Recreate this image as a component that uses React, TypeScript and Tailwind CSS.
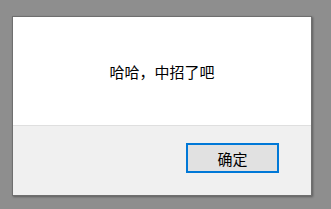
export default function App() {
  return (
    <div className="w-[331px] h-[209px] bg-[#8e8e8e] pl-[12px] pt-[16px]" style={{ fontFamily: '"Noto Sans CJK SC", "Noto Sans", sans-serif' }}>
      <div className="w-[300px] h-[180px] border border-[#6f6f6f] bg-white flex flex-col shadow-[1px_1px_2px_rgba(0,0,0,0.35)]">
        <div className="h-[108px] flex items-center justify-center text-[15px] text-black leading-none">
          哈哈，中招了吧
        </div>
        <div className="flex-1 bg-[#f0f0f0] border-t border-[#dfdfdf] flex justify-end items-start pt-[17px] pr-[32px]">
          <button className="w-[93px] h-[30px] border-2 border-[#0078d7] bg-[#e1e1e1] text-[15px] text-black leading-none flex items-center justify-center">
            确定
          </button>
        </div>
      </div>
    </div>
  );
}
